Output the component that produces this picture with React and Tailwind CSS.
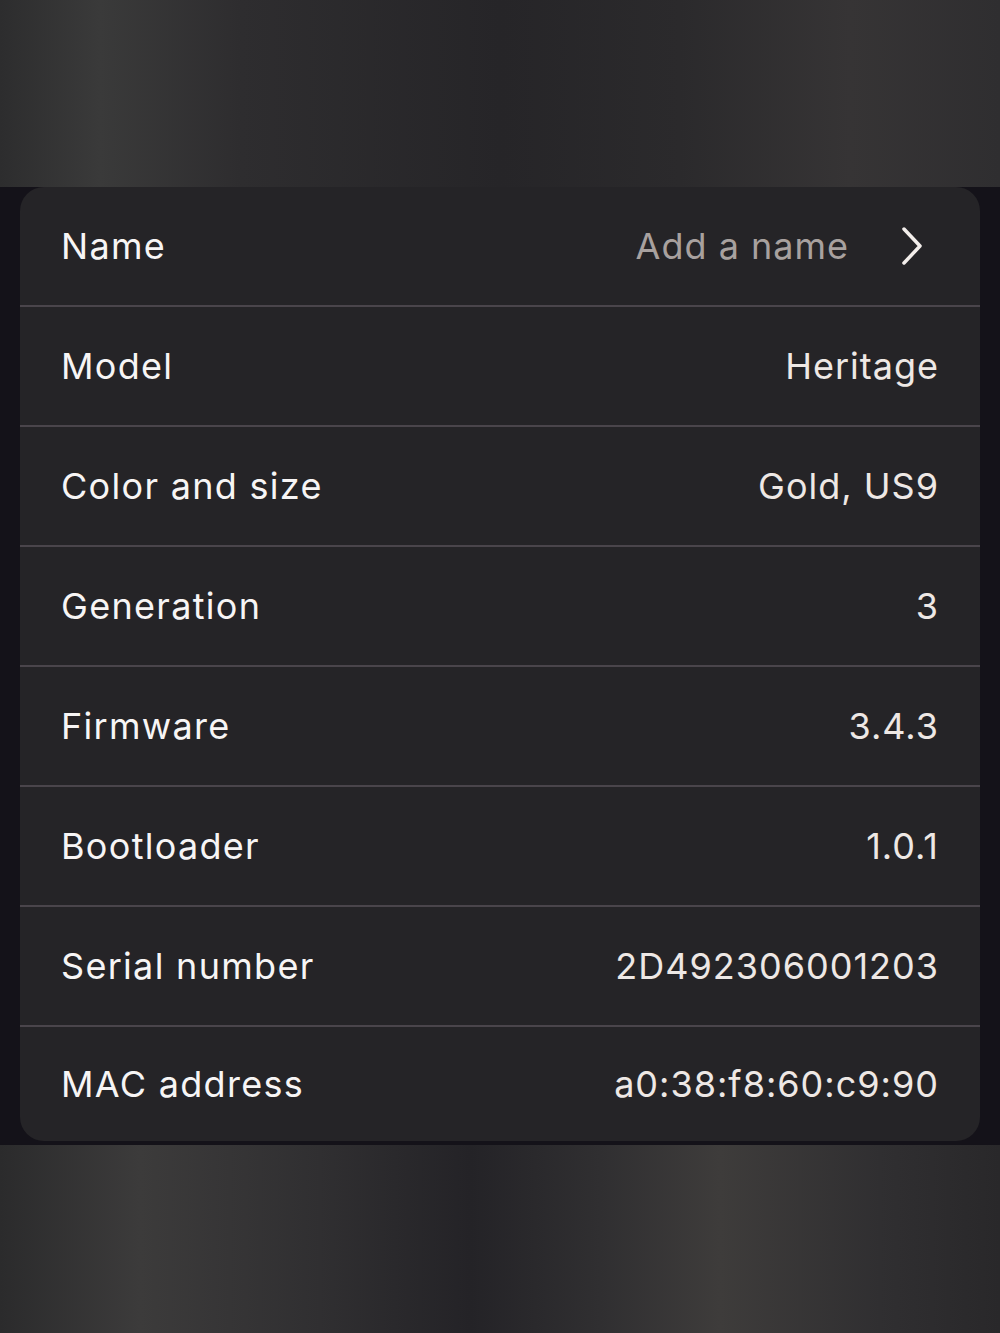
import React from "react";

const rows = [
  { label: "Name", value: "Add a name", placeholder: true, link: true },
  { label: "Model", value: "Heritage" },
  { label: "Color and size", value: "Gold, US9" },
  { label: "Generation", value: "3" },
  { label: "Firmware", value: "3.4.3" },
  { label: "Bootloader", value: "1.0.1" },
  { label: "Serial number", value: "2D492306001203" },
  { label: "MAC address", value: "a0:38:f8:60:c9:90" },
];

function Chevron() {
  return (
    <svg width="26" height="42" viewBox="0 0 26 42" fill="none" className="ml-[50px] mr-[14px]">
      <path d="M5 4 L21 21 L5 38" stroke="#f3eeeb" strokeWidth="3.5" strokeLinecap="round" strokeLinejoin="round" />
    </svg>
  );
}

export default function App() {
  return (
    <div
      className="flex min-h-[1333px] w-[1000px] flex-col bg-[#141219]"
      style={{ fontFamily: "Inter, 'Open Sans', sans-serif" }}
    >
      {/* Top blurred band */}
      <div className="h-[187px] bg-[linear-gradient(90deg,#2d2d2e_0%,#3a3a3a_10%,#2e2d2f_24%,#262528_50%,#2b2a2c_68%,#363435_85%,#2f2e30_100%)]" />

      {/* Device info card */}
      <div className="px-[20px] pb-[4px]">
        <div className="overflow-hidden rounded-[24px] bg-[#252427]">
          {rows.map((row, i) => (
            <div
              key={row.label}
              className={
                "flex items-center justify-between px-[41px] " +
                (i === 0 ? "h-[118px] " : "h-[120px] border-t-2 border-[#4a454b] ") +
                (i === rows.length - 1 ? "!h-[116px]" : "")
              }
            >
              <span className="text-[36px] tracking-[1.3px] text-[#f7f5f5]">{row.label}</span>
              <div className="flex items-center">
                <span
                  className={
                    "text-[36px] tracking-[1px] " +
                    (row.placeholder ? "text-[#a8a19f]" : "text-[#eee8e5]")
                  }
                >
                  {row.value}
                </span>
                {row.link && <Chevron />}
              </div>
            </div>
          ))}
        </div>
      </div>

      {/* Bottom blurred band */}
      <div className="flex-1 bg-[linear-gradient(90deg,#2b2b2c_0%,#3c3b3b_14%,#302f31_32%,#242327_47%,#302f31_60%,#3e3c3b_72%,#302f31_88%,#29282a_100%)]" />
    </div>
  );
}
